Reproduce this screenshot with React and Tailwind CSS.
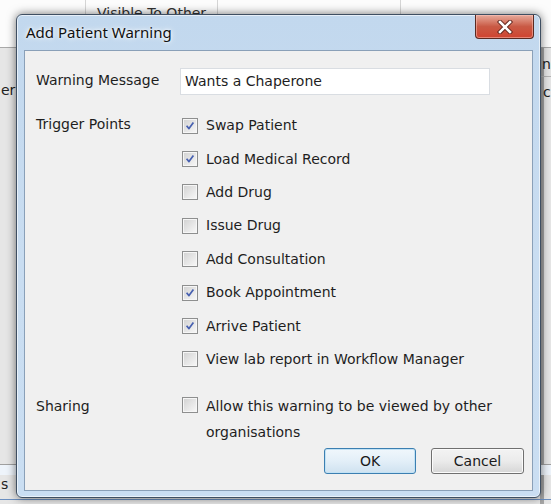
import React from 'react'

const triggers = [
  { label: 'Swap Patient', checked: true },
  { label: 'Load Medical Record', checked: true },
  { label: 'Add Drug', checked: false },
  { label: 'Issue Drug', checked: false },
  { label: 'Add Consultation', checked: false },
  { label: 'Book Appointment', checked: true },
  { label: 'Arrive Patient', checked: true },
  { label: 'View lab report in Workflow Manager', checked: false },
]

const font = "font-['DejaVu_Sans','Liberation_Sans',sans-serif]"

function CheckBox({ checked }) {
  return (
    <span className="flex h-[16px] w-[16px] shrink-0 border border-[#8e8f8f] bg-white">
      <span className="flex flex-1 items-center justify-center border border-[#f6f6f6] bg-gradient-to-br from-[#d4d4d4] to-[#f6f6f6]">
        {checked && (
          <svg width="12" height="12" viewBox="0 0 12 12">
            <path d="M2.6 5.8 L5 8.6 L9.4 2.6" fill="none" stroke="#4760b0" strokeWidth="1.7" strokeLinejoin="round" />
          </svg>
        )}
      </span>
    </span>
  )
}

function Button({ children, focused }) {
  return (
    <button
      className={
        focused
          ? 'h-[26px] w-[92px] rounded-[3px] border border-[#3c7fb1] bg-gradient-to-b from-[#f0f7fc] via-[#e3eff8] to-[#cfe2f0] text-[14px] text-[#1a1a1a] shadow-[inset_0_0_0_1px_#c2e2f5]'
          : 'h-[26px] w-[93px] rounded-[3px] border border-[#707070] bg-gradient-to-b from-[#f3f3f3] via-[#ebebeb] to-[#d6d6d6] text-[14px] text-[#1a1a1a] shadow-[inset_0_0_0_1px_#fbfbfb]'
      }
    >
      {children}
    </button>
  )
}

export default function App() {
  return (
    <div className={`relative h-[504px] w-[551px] overflow-hidden bg-[#e6e6e6] ${font}`}>
      {/* grid behind the dialog */}
      <div className="absolute inset-x-0 top-0 h-[48px] border-b border-[#a9a9a9] bg-[#fcfcfc]">
        <div className="absolute left-[85px] top-0 h-full w-px bg-[#d5d5d5]" />
        <div className="absolute left-[217px] top-0 h-full w-px bg-[#d5d5d5]" />
        <div className="absolute left-[400px] top-0 h-full w-px bg-[#d5d5d5]" />
        <span className="absolute left-[97px] top-[3px] text-[14px] text-[#333]">Visible To Other</span>
      </div>
      <div className="absolute bottom-0 left-[540px] top-[48px] w-[4px] bg-[#a6a6a6]" />
      <span className="absolute left-[1px] top-[80px] text-[14px] text-[#222]">er</span>
      <span className="absolute left-[542px] top-[54px] text-[14px] text-[#222]">n</span>
      <div className="absolute left-[540px] top-[76px] h-px w-[11px] bg-[#b5b5b5]" />
      <span className="absolute left-[543px] top-[82px] text-[14px] text-[#222]">c</span>
      <div className="absolute inset-x-0 top-[464px] h-px bg-[#a0a0a0]" />
      <div className="absolute inset-x-0 top-[465px] h-[10px] bg-[#eef4fb]" />
      <span className="absolute left-[1px] top-[474px] text-[14px] text-[#222]">s</span>
      <div className="absolute inset-x-0 top-[499px] h-px bg-[#6b8fc0]" />

      {/* dialog window */}
      <div className="absolute left-[16px] top-[14px] flex h-[484px] w-[525px] flex-col rounded-[6px] border border-[#3f4f62] bg-gradient-to-b from-[#c2d8ee] via-[#c9ddf1] to-[#cadef2] px-[7px] pb-[6px] shadow-[0_0_10px_rgba(0,0,0,0.55),inset_0_0_0_1px_rgba(255,255,255,0.6)]">
        <div className="relative flex h-[35px] shrink-0 items-center pl-[2px]">
          <span className="text-[15px] text-[#111] [text-shadow:0_0_6px_#fff,0_0_3px_#fff] font-['Noto_Sans','Open_Sans',sans-serif]">
            Add Patient Warning
          </span>
          <div className="absolute right-[-1px] top-0 flex h-[24px] w-[59px] items-center justify-center rounded-b-[4px] border border-t-0 border-[#5a2a22] bg-gradient-to-b from-[#e6aa9c] via-[#c95a45] to-[#cf4330] shadow-[inset_0_0_0_1px_rgba(255,200,190,0.5)]">
            <svg width="16" height="14" viewBox="0 0 16 14">
              <path d="M3 2 L13 12 M13 2 L3 12" stroke="#5b2018" strokeWidth="4.4" strokeLinecap="square" />
              <path d="M3 2 L13 12 M13 2 L3 12" stroke="#ffffff" strokeWidth="2.6" strokeLinecap="square" />
            </svg>
          </div>
        </div>

        <div className="flex flex-1 flex-col border border-[#8aa0b8] bg-[#f0f0f0] pl-[11px] pr-[8px] pt-[17px] text-[14px] text-[#1e1e1e]">
          <div className="grid grid-cols-[144px_1fr]">
            <span className="self-center pb-[3px]">Warning Message</span>
            <div className="flex h-[27px] w-[310px] items-center border border-[#d9dde2] bg-white pl-[4px]">
              Wants a Chaperone
            </div>
          </div>

          <div className="mt-[14px] grid grid-cols-[144px_1fr]">
            <span className="pt-[5px]">Trigger Points</span>
            <div className="flex flex-col">
              {triggers.map((t) => (
                <label key={t.label} className="flex h-[33.4px] items-center gap-[8px] pl-[2px]">
                  <CheckBox checked={t.checked} />
                  <span>{t.label}</span>
                </label>
              ))}
            </div>
          </div>

          <div className="mt-[17px] grid grid-cols-[144px_1fr] leading-[26px]">
            <span>Sharing</span>
            <label className="flex items-start gap-[8px] pl-[2px]">
              <span className="mt-[4px]">
                <CheckBox checked={false} />
              </span>
              <span>
                Allow this warning to be viewed by other
                <br />
                organisations
              </span>
            </label>
          </div>

          <div className="mt-[3px] flex justify-end gap-[15px]">
            <Button focused>OK</Button>
            <Button>Cancel</Button>
          </div>
        </div>
      </div>
    </div>
  )
}
